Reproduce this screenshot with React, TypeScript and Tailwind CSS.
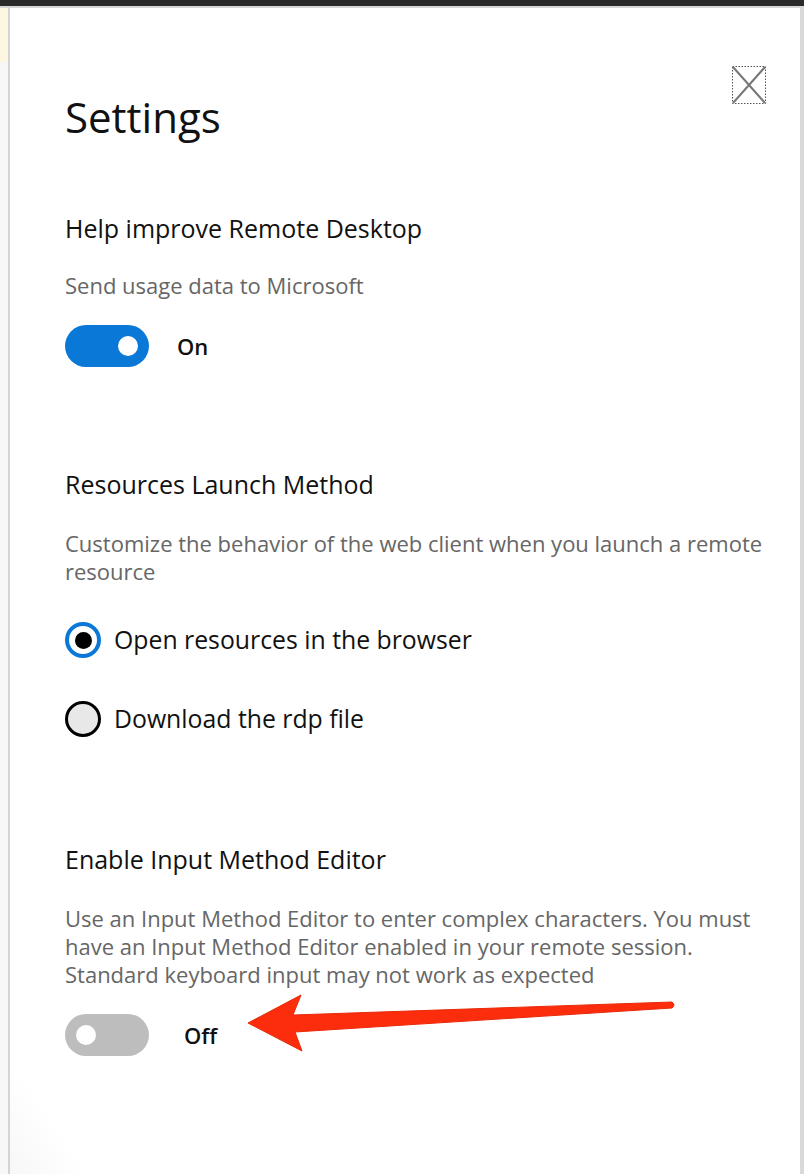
import React from "react";

function Toggle({ on }: { on: boolean }) {
  return (
    <div
      className={
        on
          ? "w-[84px] h-[42px] rounded-full bg-[#0a78d7] flex items-center justify-end pr-[11px]"
          : "w-[84px] h-[42px] rounded-full bg-[#bdbdbd] flex items-center justify-start pl-[11px]"
      }
    >
      <div className="w-[20px] h-[20px] rounded-full bg-white" />
    </div>
  );
}

function Radio({ checked, label }: { checked: boolean; label: string }) {
  return (
    <div className="flex items-center gap-[13px] h-[40px]">
      {checked ? (
        <div className="w-[36px] h-[36px] rounded-full border-[4px] border-[#0a78d7] flex items-center justify-center">
          <div className="w-[17px] h-[17px] rounded-full bg-black" />
        </div>
      ) : (
        <div className="w-[36px] h-[36px] rounded-full border-[3px] border-black bg-[#e8e8e8]" />
      )}
      <span className="text-[24.8px] text-[#111]">{label}</span>
    </div>
  );
}

export default function App() {
  return (
    <div className="relative w-[804px] h-[1174px] bg-white overflow-hidden font-['Open_Sans',sans-serif] flex flex-col">
      <div className="h-[6px] bg-[#2a2a2a]" />
      <div className="h-[2px] bg-[#d6d6d6]" />
      <div className="flex flex-1">
        <div className="w-[8px] flex flex-col">
          <div className="h-[54px] bg-[#fdf7e2]" />
          <div className="flex-1 bg-[#f7f7f7]" />
        </div>
        <div className="w-[2px] bg-[#d4d4d4]" />
        <div className="flex-1 pl-[55px] pr-[34px] bg-gradient-to-tr from-[#f7f7f7] via-white via-[5%] to-white">
          <div className="flex justify-between items-start">
            <h1 className="mt-[81px] text-[42px] leading-[56px] text-[#111]">Settings</h1>
            <svg width="34" height="38" viewBox="0 0 34 38" className="mt-[58px]">
              <rect x="0.5" y="0.5" width="33" height="37" fill="none" stroke="#555" strokeWidth="1" strokeDasharray="1.5 1.5" />
              <path d="M1 1 L33 37 M33 1 L1 37" stroke="#777" strokeWidth="2" />
            </svg>
          </div>

          <h2 className="mt-[67px] text-[25px] leading-[32px] text-[#111]">Help improve Remote Desktop</h2>
          <p className="mt-[27px] text-[22px] leading-[28px] text-[#666]">Send usage data to Microsoft</p>
          <div className="mt-[26px] flex items-center gap-[28px]">
            <Toggle on />
            <span className="text-[22px] font-semibold text-[#111]">On</span>
          </div>

          <h2 className="mt-[101px] text-[25px] leading-[32px] text-[#111]">Resources Launch Method</h2>
          <p className="mt-[29px] text-[22px] leading-[28px] text-[#666]">
            Customize the behavior of the web client when you launch a remote resource
          </p>
          <div className="mt-[35px] flex flex-col gap-[39px]">
            <Radio checked label="Open resources in the browser" />
            <Radio checked={false} label="Download the rdp file" />
          </div>

          <h2 className="mt-[104px] text-[25px] leading-[32px] text-[#111]">Enable Input Method Editor</h2>
          <p className="mt-[29px] text-[22px] leading-[28px] text-[#666]">
            Use an Input Method Editor to enter complex characters. You must have an Input Method Editor
            enabled in your remote session. Standard keyboard input may not work as expected
          </p>
          <div className="mt-[26px] flex items-center gap-[35px]">
            <Toggle on={false} />
            <span className="text-[22px] font-semibold text-[#111]">Off</span>
          </div>
        </div>
        <div className="w-[4px] bg-[#d9d9d9]" />
      </div>

      <svg
        className="absolute left-[245px] top-[990px]"
        width="435"
        height="65"
        viewBox="0 0 435 65"
      >
        <path
          d="M3 33 L56 5 L48 25 L427 12 Q431 15 427 18 L50 42 L57 61 Z"
          fill="#fb2d0c"
          stroke="#e82a0a"
          strokeWidth="1"
          strokeLinejoin="round"
        />
      </svg>
    </div>
  );
}
